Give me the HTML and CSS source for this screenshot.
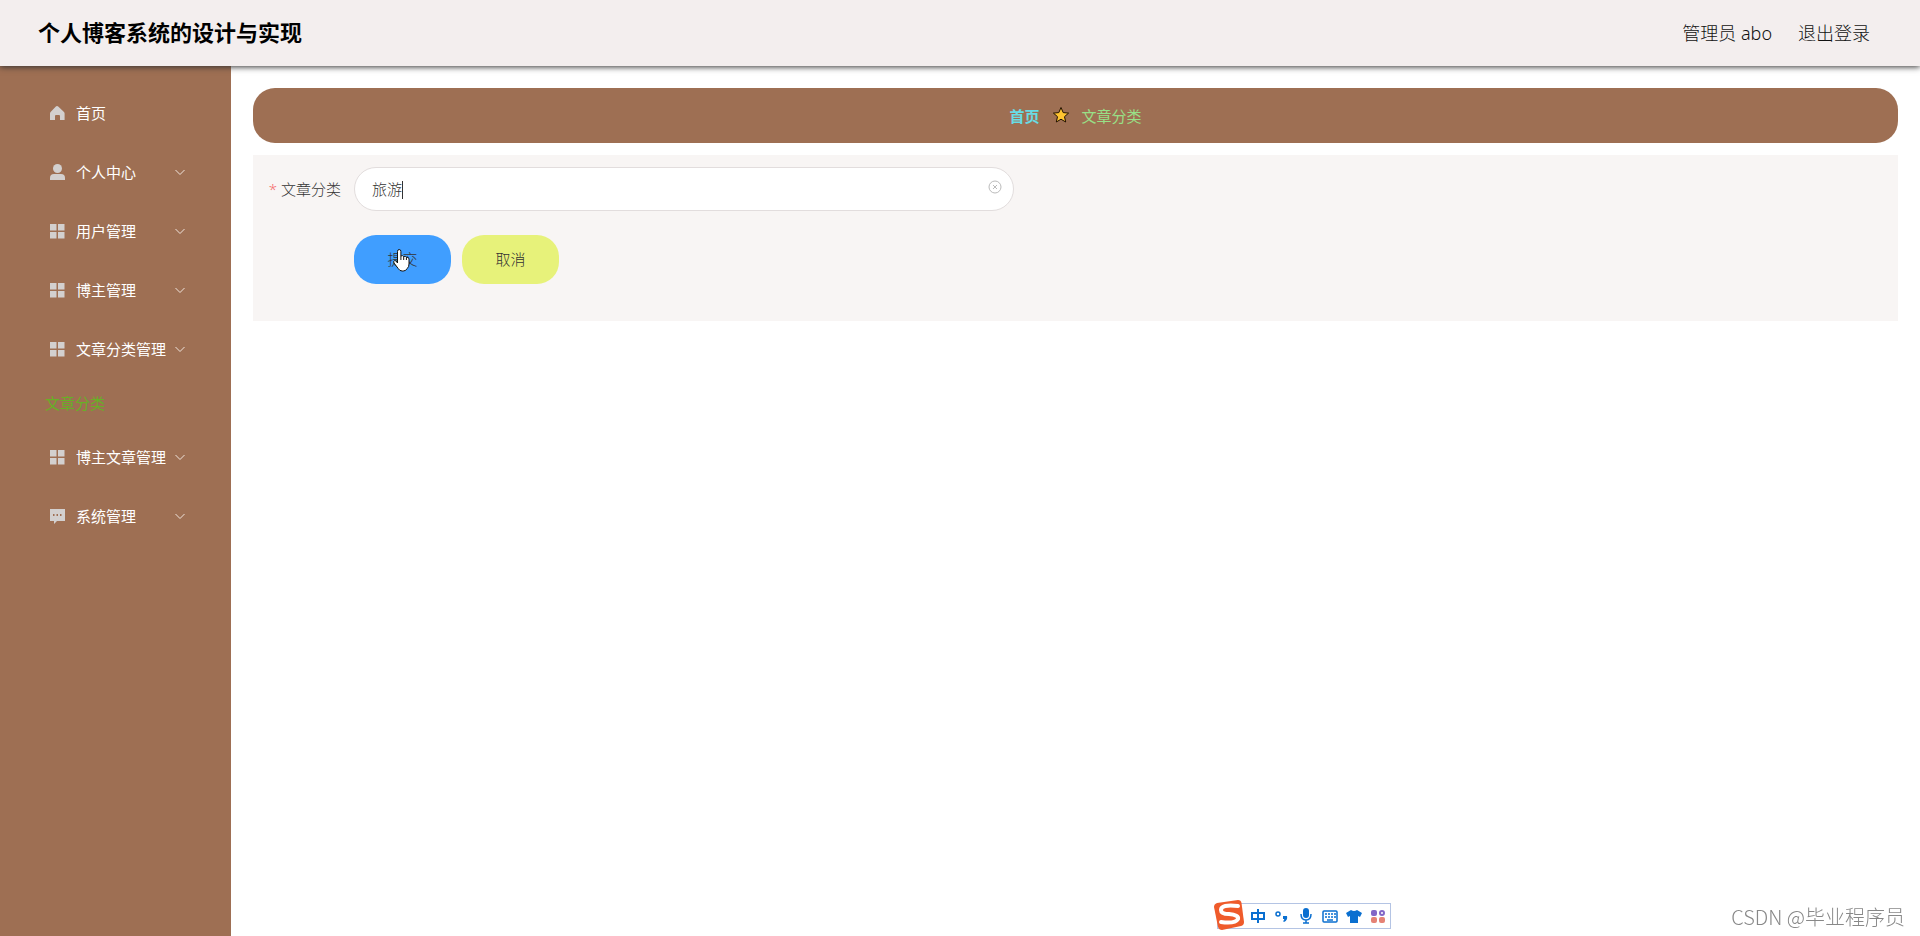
FILE: index.html
```html
<!DOCTYPE html>
<html lang="zh-CN">
<head>
    <meta charset="UTF-8">
    <meta name="viewport" content="width=device-width, initial-scale=1.0">
    <title>个人博客系统的设计与实现</title>
    <link rel="stylesheet" href="styles.css">
</head>
<body>
    <svg class="sprite" aria-hidden="true">
        <symbol id="icon-grid" viewBox="0 0 16 16"><path d="M1 1h6.500v6.500H1zM9 1h6.500v6.500H9zM1 9h6.500v6.500H1zM9 9h6.500v6.500H9z"/></symbol>
        <symbol id="icon-home" viewBox="0 0 16 16"><path d="M8 1q.7 0 1.500.8L15 7q.6.600.6 1.500V15h-4.600v-4q0-1-1-1H7q-1 0-1 1v4H1V8.500Q1 7.600 1.600 7l5-5.200Q7.300 1 8 1z"/></symbol>
        <symbol id="icon-user" viewBox="0 0 16 16"><circle cx="8.500" cy="4.500" r="4.500"/><path d="M1 16v-2q0-4 4-4h7q4 0 4 4v2z"/></symbol>
        <symbol id="icon-chat" viewBox="0 0 16 16"><path fill-rule="evenodd" d="M1 1h15v12H8l-3 3v-3H1zM4 6v2h1.500V6zM7.500 6v2H9V6zM11 6v2h1.500V6z"/></symbol>
        <symbol id="icon-arrow" viewBox="0 0 12 12"><path d="M1.500 4 6 8.500 10.500 4" fill="none" stroke="currentColor"/></symbol>
    </svg>

    <header class="header">
        <h1>个人博客系统的设计与实现</h1>
        <div class="user">
            <span>管理员 abo</span>
            <a href="#">退出登录</a>
        </div>
    </header>

    <div class="layout">
        <nav class="sidebar">
            <ul class="menu">
                <li><a href="#"><svg class="icon"><use href="#icon-home"/></svg><span>首页</span></a></li>
                <li><a href="#"><svg class="icon"><use href="#icon-user"/></svg><span>个人中心</span><svg class="arrow"><use href="#icon-arrow"/></svg></a></li>
                <li><a href="#"><svg class="icon"><use href="#icon-grid"/></svg><span>用户管理</span><svg class="arrow"><use href="#icon-arrow"/></svg></a></li>
                <li><a href="#"><svg class="icon"><use href="#icon-grid"/></svg><span>博主管理</span><svg class="arrow"><use href="#icon-arrow"/></svg></a></li>
                <li>
                    <a href="#"><svg class="icon"><use href="#icon-grid"/></svg><span>文章分类管理</span><svg class="arrow"><use href="#icon-arrow"/></svg></a>
                    <ul class="submenu">
                        <li><a href="#">文章分类</a></li>
                    </ul>
                </li>
                <li><a href="#"><svg class="icon"><use href="#icon-grid"/></svg><span>博主文章管理</span><svg class="arrow"><use href="#icon-arrow"/></svg></a></li>
                <li><a href="#"><svg class="icon"><use href="#icon-chat"/></svg><span>系统管理</span><svg class="arrow"><use href="#icon-arrow"/></svg></a></li>
            </ul>
        </nav>

        <main class="main">
            <div class="breadcrumb">
                <a href="#">首页</a>
                <svg class="star" viewBox="0 0 18 18"><path d="M9 1.500 11.200 6.600 16.600 7.100 12.500 10.700 13.700 16 9 13.200 4.300 16 5.500 10.700 1.400 7.100 6.800 6.600z"/></svg>
                <span>文章分类</span>
            </div>

            <form class="form">
                <div class="row">
                    <label for="fenlei"><em>*</em> 文章分类</label>
                    <div class="field">
                        <input type="text" id="fenlei" value="旅游">
                        <span class="caret"></span>
                        <button type="button" class="clear" aria-label="清空">
                            <svg viewBox="0 0 14 14"><circle cx="7" cy="7" r="6"/><path d="m5 5 4 4M9 5 5 9"/></svg>
                        </button>
                    </div>
                </div>
                <div class="buttons">
                    <button type="button" class="btn submit">提交
                        <svg class="cursor" viewBox="0 0 20 26"><path d="M5.500 15V3.500q0-2 1.700-2t1.700 2V8q1.800-1 2.800.5 1.900-.8 2.700.8 2.600-.6 2.600 1.700v5q0 3-1.800 4.500-1.200 2.500-4 2.500h-1q-2.600 0-4-2.500L2 15q-1-2 .8-2.500 1.200-.2 2.700 2.500zM8.900 8v4M11.700 8.500V12M14.400 9.300V12"/></svg>
                    </button>
                    <button type="button" class="btn cancel">取消</button>
                </div>
            </form>
        </main>
    </div>

    <!-- 输入法工具条 -->
    <div class="ime">
        <svg class="ime-logo" viewBox="0 0 32 32"><path class="tile" d="M4 4 25 1q3 0 3.500 3l2.500 19q0 3-3 4L9 31q-3 0-4-3L1 8q0-3 3-4z"/><path class="swirl" d="M25 7Q8 5 8 11q0 4 8 4 10 1 9 5-3 5-17 3"/></svg>
        <svg viewBox="0 0 16 16"><path class="line" d="M2 5h12v6H2zM8 1v14"/></svg>
        <svg viewBox="0 0 16 16"><circle class="line thin" cx="4" cy="6" r="2"/><path d="M9 8h4q1 4-3 6l-1-1q2-1 1-2H9z"/></svg>
        <svg viewBox="0 0 16 16"><rect x="5" y="0" width="6" height="10" rx="3"/><path class="line thin" d="M3 6q0 6 5 6t5-6M8 12v3M5 15h6"/></svg>
        <svg viewBox="0 0 16 16"><rect class="line thin" x="1" y="3" width="14" height="11" rx="1"/><path class="line thin" stroke-dasharray="2 1" d="M3 6h11M3 9h11"/><path class="line thin" d="M5 12h6"/></svg>
        <svg viewBox="0 0 16 16"><path d="M5 2q3 2 6 0l5 3-2 4-2-1v7H4V8L2 9 0 5z"/></svg>
        <svg viewBox="0 0 16 16"><rect fill="#8367c7" x="1" y="2" width="6" height="6" rx="2"/><circle cx="12" cy="5" r="2" fill="none" stroke="#8367c7" stroke-width="2"/><rect fill="#e58275" x="1" y="9" width="6" height="6" rx="2"/><rect fill="#e58275" x="9" y="9" width="6" height="6" rx="2"/></svg>
    </div>
    <div class="watermark">CSDN @毕业程序员</div>
</body>
</html>
```
FILE: styles.css
```css
* { box-sizing: border-box; }
body { margin: 0; min-height: 100vh; display: flex; flex-direction: column; background: #fff; color: #333; font-family: "Noto Sans", "Noto Sans CJK SC", sans-serif; font-size: 15px; }
a { color: inherit; text-decoration: none; }
ul { list-style: none; margin: 0; padding: 0; }
button, input { font: inherit; color: inherit; }
.sprite { position: absolute; width: 0; height: 0; }

.header { position: relative; z-index: 1; height: 66px; padding: 0 50px 2px 38px; display: flex; align-items: center; justify-content: space-between; background: #f3eeee; box-shadow: 0 1px 6px #333; }
.header h1 { margin: 0; font-size: 22px; line-height: 32px; font-weight: 700; color: #000; }
.user { display: flex; gap: 26px; font-size: 18px; font-weight: 300; color: #111; }

.layout { flex: 1; display: flex; }
.sidebar { width: 231px; flex-shrink: 0; padding-top: 17px; background: #9e6f53; }
.menu a { height: 59px; padding: 0 45px 0 49px; display: flex; align-items: center; color: #fff; }
.menu .icon { width: 16px; height: 16px; margin-right: 11px; fill: #d3d0cf; }
.menu .arrow { width: 12px; height: 12px; margin-left: auto; color: #f0e4dc; }
.menu .submenu a { height: 49px; padding-left: 45px; color: #67b026; }

.main { flex: 1; padding: 22px; }
.breadcrumb { height: 55px; padding-bottom: 1px; display: flex; align-items: center; justify-content: center; gap: 12px; border-radius: 22px; background: #9e6f53; color: #98e087; }
.breadcrumb a { color: #68dce5; font-weight: 700; }
.star { width: 18px; height: 18px; fill: #ffc431; stroke: #201000; stroke-width: 1; }

.form { margin-top: 12px; padding: 12px 14px 37px; background: #f8f5f4; }
.row { display: flex; align-items: center; }
.row label { width: 87px; padding: 0 13px 2px 0; text-align: right; font-weight: 300; white-space: nowrap; }
.row em { color: #f56c6c; font-style: normal; }
.field { position: relative; width: 60%; max-width: 660px; }
.field input { display: block; width: 100%; height: 44px; padding: 0 40px 2px 17px; border: 1px solid #e2dddd; border-radius: 22px; background: #fff; outline: none; font-weight: 300; }
.caret { position: absolute; left: 48px; top: 14px; width: 1px; height: 18px; background: #333; }
.clear { position: absolute; right: 12px; top: 13px; width: 14px; height: 14px; padding: 0; border: none; background: none; }
.clear svg { display: block; fill: none; stroke: #bbb; }
.buttons { display: flex; gap: 11px; margin: 24px 0 0 87px; }
.btn { position: relative; width: 97px; height: 49px; padding: 0 0 2px; border: none; border-radius: 22px; font-weight: 300; cursor: pointer; }
.submit { background: #409eff; }
.cancel { background: #e7f27a; }
.cursor { position: absolute; left: 38px; top: 13px; width: 20px; height: 26px; fill: #fff; stroke: #111; stroke-width: 1; }

.ime { position: fixed; right: 529px; bottom: 7px; height: 26px; padding: 0 4px 0 32px; display: flex; align-items: center; gap: 8px; border: 1px solid #b4c4e4; background: #fff; }
.ime svg { width: 16px; height: 16px; fill: #0a6fd0; }
.ime .line { fill: none; stroke: #0a6fd0; stroke-width: 2; }
.ime .thin { stroke-width: 1.5; }
.ime .ime-logo { position: absolute; left: -5px; top: -5px; width: 32px; height: 32px; }
.ime .tile { fill: #ef5b2b; }
.ime .swirl { fill: none; stroke: #fff; stroke-width: 4; stroke-linecap: round; }
.watermark { position: fixed; right: 15px; bottom: 5px; font-family: "Noto Sans CJK SC", sans-serif; font-size: 20px; line-height: 28px; font-weight: 300; color: #888; }
```
